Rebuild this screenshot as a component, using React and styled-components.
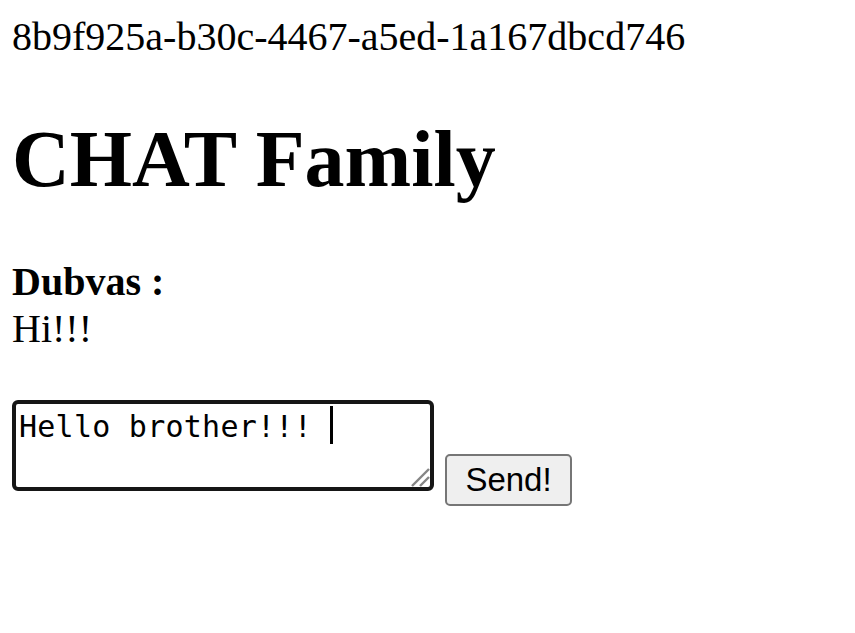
import React from "react";
import styled, { createGlobalStyle } from "styled-components";

const GlobalStyle = createGlobalStyle`
  html, body {
    margin: 0;
    background: #ffffff;
  }
  body {
    font-family: "Liberation Serif", "Times New Roman", serif;
    color: #000000;
  }
`;

const Page = styled.div`
  padding: 13px 12px;
  font-size: 40px;
  line-height: normal;
`;

const RoomId = styled.div``;

const Title = styled.h1`
  font-size: 80px;
  font-weight: 700;
  margin: 0.67em 0;
  line-height: normal;
`;

const Message = styled.div``;

const Author = styled.b`
  display: block;
  font-weight: 700;
`;

const Text = styled.div``;

const Form = styled.form`
  display: flex;
  align-items: flex-start;
  margin-top: 48px;
`;

const Field = styled.div`
  position: relative;
  width: 422px;
  height: 91px;
`;

const Input = styled.textarea`
  box-sizing: border-box;
  width: 100%;
  height: 100%;
  margin: 0;
  padding: 5px 3px 2px;
  border: 4px solid #161616;
  border-radius: 6px;
  outline: none;
  resize: none;
  font-family: "DejaVu Sans Mono", "Liberation Mono", monospace;
  font-size: 30px;
  line-height: 36px;
  letter-spacing: 0.25px;
  color: #000000;
  background: #ffffff;
  caret-color: transparent;
`;

const Caret = styled.span`
  position: absolute;
  left: 318px;
  top: 6px;
  width: 3px;
  height: 38px;
  background: #000000;
`;

const Grip = styled.svg`
  position: absolute;
  right: 4px;
  bottom: 4px;
  width: 20px;
  height: 20px;
`;

const SendButton = styled.button`
  box-sizing: border-box;
  margin: 54px 0 0 11px;
  width: 127px;
  height: 52px;
  padding: 0;
  border: 2px solid #767676;
  border-radius: 5px;
  background: #efefef;
  font-family: "Liberation Sans", Arial, sans-serif;
  font-size: 33px;
  color: #000000;
`;

export default function App() {
  return (
    <>
      <GlobalStyle />
      <Page>
        <RoomId>8b9f925a-b30c-4467-a5ed-1a167dbcd746</RoomId>
        <Title>CHAT Family</Title>
        <Message>
          <Author>Dubvas :</Author>
          <Text>Hi!!!</Text>
        </Message>
        <Form onSubmit={(e) => e.preventDefault()}>
          <Field>
            <Input defaultValue="Hello brother!!! " />
            <Caret />
            <Grip viewBox="0 0 20 20">
              <path d="M2 19 L19 2" stroke="#858585" strokeWidth="2.4" />
              <path d="M10 19 L19 10" stroke="#858585" strokeWidth="2.4" />
            </Grip>
          </Field>
          <SendButton type="submit">Send!</SendButton>
        </Form>
      </Page>
    </>
  );
}
